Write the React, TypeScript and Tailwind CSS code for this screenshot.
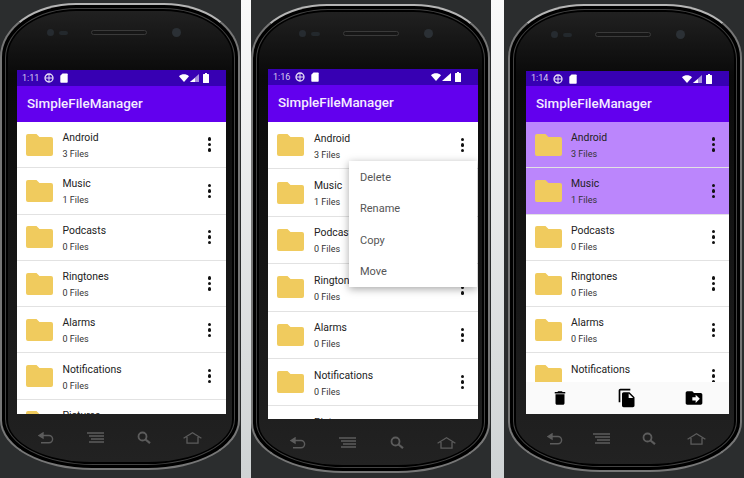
import { MdDelete, MdDriveFileMove, MdFileCopy } from 'react-icons/md'

const folders = [
  { name: 'Android', files: 3 },
  { name: 'Music', files: 1 },
  { name: 'Podcasts', files: 0 },
  { name: 'Ringtones', files: 0 },
  { name: 'Alarms', files: 0 },
  { name: 'Notifications', files: 0 },
  { name: 'Pictures', files: 0 },
]

function FolderIcon() {
  return (
    <svg viewBox="0 0 27 22" className="w-[27px] h-[22px] shrink-0">
      <path d="M2 0H10.5L13.5 3H25a2 2 0 0 1 2 2V20a2 2 0 0 1-2 2H2a2 2 0 0 1-2-2V2a2 2 0 0 1 2-2Z" fill="#f0cb5e" />
    </svg>
  )
}

function Dots() {
  return (
    <div className="flex flex-col gap-[2px]">
      <div className="w-[3.5px] h-[3.5px] rounded-full bg-[#111]" />
      <div className="w-[3.5px] h-[3.5px] rounded-full bg-[#111]" />
      <div className="w-[3.5px] h-[3.5px] rounded-full bg-[#111]" />
    </div>
  )
}

function StatusBar({ time, solidSignal, className }: { time: string; solidSignal?: boolean; className: string }) {
  return (
    <div className={`${className} shrink-0 bg-[#3700b3] flex items-center justify-between pl-[5px] pr-[17px]`}>
      <div className="flex items-center">
        <span className="text-[9px] leading-none text-[#d9cdf2] w-[22px]">{time}</span>
        <svg viewBox="0 0 10 10" className="w-[10px] h-[10px]" fill="none" stroke="#e6def6" strokeWidth="1.3">
          <circle cx="5" cy="5" r="4" />
          <path d="M1 5H9M5 1V9" strokeWidth="1" />
        </svg>
        <svg viewBox="0 0 8 10" className="w-[8px] h-[10px] ml-[6px]">
          <path d="M2.5 0.5H7a.7.7 0 0 1 .7.7V9a.7.7 0 0 1-.7.7H1A.7.7 0 0 1 .3 9V2.8Z" fill="#fff" />
        </svg>
      </div>
      <div className="flex items-center">
        <svg viewBox="0 0 10 8" className="w-[10px] h-[8px]">
          <path d="M0 2.2C2.8-.4 7.2-.4 10 2.2L5 8Z" fill="#fff" />
        </svg>
        <svg viewBox="0 0 9 8" className="w-[9px] h-[8px] ml-[1px]">
          {solidSignal ? (
            <path d="M9 0V8H0Z" fill="#fff" />
          ) : (
            <>
              <path d="M9 0V8H0Z" fill="#a78fdc" />
              <path d="M5 4V8H0Z" fill="#fff" />
            </>
          )}
        </svg>
        <svg viewBox="0 0 6 10" className="w-[6px] h-[10px] ml-[4px]">
          <path d="M2 0H4V1H5.4a.6.6 0 0 1 .6.6V9.4a.6.6 0 0 1-.6.6H.6A.6.6 0 0 1 0 9.4V1.6A.6.6 0 0 1 .6 1H2Z" fill="#fff" />
        </svg>
      </div>
    </div>
  )
}

function NavIcons() {
  return (
    <>
      <svg viewBox="0 0 16 12" className="w-[16px] h-[12px] justify-self-center" fill="none" stroke="#5c5c5c" strokeWidth="1.4">
        <path d="M1 3.5 5 1V6Z" fill="#5c5c5c" />
        <path d="M5 3.5H11a3.6 3.6 0 0 1 0 7.2H3" />
      </svg>
      <svg viewBox="0 0 17 11" className="w-[17px] h-[11px] justify-self-center" fill="none" stroke="#5c5c5c" strokeWidth="1.4">
        <path d="M0 1H17M2 4H17M4 7H17M2 10H17" />
      </svg>
      <svg viewBox="0 0 14 13" className="w-[14px] h-[13px] justify-self-center" fill="none" stroke="#5c5c5c" strokeWidth="1.8">
        <circle cx="5.5" cy="5.5" r="4" />
        <path d="M8.5 8.5 13 12.2" strokeWidth="2.2" />
      </svg>
      <svg viewBox="0 0 19 12" className="w-[19px] h-[12px] justify-self-center" fill="none" stroke="#5c5c5c" strokeWidth="1.3">
        <path d="M0.6 6.2 9.5 0.8 18.4 6.2M4 5V11.2H15V5" />
      </svg>
    </>
  )
}

function Sensors() {
  return (
    <>
      <div className="w-[7px] h-[7px] rounded-full bg-[#262b30]" />
      <div className="w-[9px] h-[4px] rounded-full bg-[#23282c] ml-[5px]" />
      <div className="w-[56px] h-[5px] rounded-full border border-[#3a3a3a] bg-[#161616] ml-[23px]" />
      <div className="w-[9px] h-[9px] rounded-full bg-[#2b3035] ml-[25px]" />
    </>
  )
}

function FileList({
  rowClass,
  textClass,
  folderClass,
  dotsClass,
  selected = [],
}: {
  rowClass: string
  textClass: string
  folderClass: string
  dotsClass: string
  selected?: string[]
}) {
  return (
    <div className="flex-1 min-h-0 overflow-hidden">
      {folders.map((folder) => (
        <div
          key={folder.name}
          className={`${rowClass} ${selected.includes(folder.name) ? 'bg-[#bb86fc]' : 'bg-white'} box-border shrink-0 flex items-center border-b-[1.5px] border-[#e2e2e2]`}
        >
          <div className={folderClass}>
            <FolderIcon />
          </div>
          <div className={`${textClass} flex-1 pt-[3px]`}>
            <div className="text-[10.4px] text-[#222]">{folder.name}</div>
            <div className="text-[9px] text-[#333]">{folder.files} Files</div>
          </div>
          <div className={dotsClass}>
            <Dots />
          </div>
        </div>
      ))}
    </div>
  )
}

function AppBar({ className }: { className: string }) {
  return (
    <div className={`${className} shrink-0 bg-[#6200ee] flex items-center text-[13.4px] font-medium text-[#f4ecff]`}>
      SimpleFileManager
    </div>
  )
}

const rimClass = 'rounded-[76px_76px_92px_92px/54px_54px_50px_50px] border-2 border-[#777] border-t-[#b5b5b5] bg-black p-[3px]'
const midRimClass = 'rounded-[72px_72px_88px_88px/50px_50px_46px_46px] border border-[#444] bg-black p-[2px]'
const bodyGradient = 'rounded-[68px_68px_84px_84px/46px_46px_42px_42px] bg-gradient-to-b from-[#212121] via-[#0a0a0a] via-[14%] to-[#222222] flex flex-col'

export default function App() {
  return (
    <div className="w-[744px] h-[478px] flex overflow-hidden bg-gradient-to-b from-[#fafafa] to-[#cfd3d4] [font-family:Roboto,sans-serif]">
      {/* left phone */}
      <div className="w-[241px] h-[478px] shrink-0 overflow-hidden bg-[#2b2d2e] pt-[3px]">
        <div className={`${rimClass} w-[240px] h-[467px]`}>
          <div className={`${midRimClass} h-full`}>
            <div className={`${bodyGradient} h-full pl-[9px] pr-[6px]`}>
              <div className="h-[59px] shrink-0 flex items-center pb-[16px] pl-[30px]">
                <Sensors />
              </div>
              <div className="h-[344px] shrink-0 flex flex-col overflow-hidden">
                <StatusBar time="1:11" className="h-[16px]" />
                <AppBar className="h-[36px] pl-[10px]" />
                <FileList
                  rowClass="h-[46.3px]"
                  folderClass="ml-[9px]"
                  textClass="ml-[9.5px] leading-[16px]"
                  dotsClass="mr-[15px]"
                />
              </div>
              <div className="grid grid-cols-4 w-[195px] ml-[5px] pt-[17px] items-center">
                <NavIcons />
              </div>
            </div>
          </div>
        </div>
      </div>

      {/* middle phone, overflow menu open */}
      <div className="w-[240px] h-[478px] shrink-0 ml-[10px] overflow-hidden bg-[#2b2d2e] pt-[4px]">
        <div className={`${rimClass} w-[239px] h-[469px]`}>
          <div className={`${midRimClass} h-full`}>
            <div className={`${bodyGradient} h-full pl-[9px] pr-[4px]`}>
              <div className="h-[57px] shrink-0 flex items-center pb-[14px] pl-[31px]">
                <Sensors />
              </div>
              <div className="relative h-[350px] shrink-0 flex flex-col overflow-hidden">
                <StatusBar time="1:16" solidSignal className="h-[16px]" />
                <AppBar className="h-[37px] pl-[10px]" />
                <FileList
                  rowClass="h-[47.4px]"
                  folderClass="ml-[9px]"
                  textClass="ml-[10px] leading-[17px]"
                  dotsClass="mr-[14px]"
                />
                <div className="absolute left-[81px] top-[92px] w-[128px] h-[126px] pt-[1px] bg-white shadow-[0_2px_8px_rgba(0,0,0,0.35)] flex flex-col text-[11px] text-[#555]">
                  {['Delete', 'Rename', 'Copy', 'Move'].map((item) => (
                    <div key={item} className="h-[31.5px] shrink-0 flex items-center pl-[11px]">
                      {item}
                    </div>
                  ))}
                </div>
              </div>
              <div className="grid grid-cols-4 w-[198px] ml-[5px] pt-[17px] items-center">
                <NavIcons />
              </div>
            </div>
          </div>
        </div>
      </div>

      {/* right phone, selection mode */}
      <div className="w-[240px] h-[478px] shrink-0 ml-[13px] overflow-hidden bg-[#2b2d2e] pt-[4px] pl-[4px]">
        <div className={`${rimClass} w-[234px] h-[468px]`}>
          <div className={`${midRimClass} h-full`}>
            <div className={`${bodyGradient} h-full pl-[10px] pr-[5px]`}>
              <div className="h-[59px] shrink-0 flex items-center pb-[14px] pl-[25px]">
                <Sensors />
              </div>
              <div className="h-[343px] shrink-0 flex flex-col overflow-hidden">
                <StatusBar time="1:14" className="h-[15px]" />
                <AppBar className="h-[36px] pl-[10px]" />
                <FileList
                  rowClass="h-[46.3px]"
                  folderClass="ml-[9px]"
                  textClass="ml-[9px] leading-[16px]"
                  dotsClass="mr-[14px]"
                  selected={['Android', 'Music']}
                />
                <div className="h-[32px] shrink-0 bg-[#fafafa] grid grid-cols-3 items-center w-full pl-[1px] pr-[2px]">
                  <MdDelete className="w-[18px] h-[18px] justify-self-center text-black" />
                  <MdFileCopy className="w-[20px] h-[20px] justify-self-center text-black" />
                  <MdDriveFileMove className="w-[20px] h-[20px] justify-self-center text-black" />
                </div>
              </div>
              <div className="grid grid-cols-4 w-[189px] ml-[5px] pt-[18px] items-center">
                <NavIcons />
              </div>
            </div>
          </div>
        </div>
      </div>
    </div>
  )
}
